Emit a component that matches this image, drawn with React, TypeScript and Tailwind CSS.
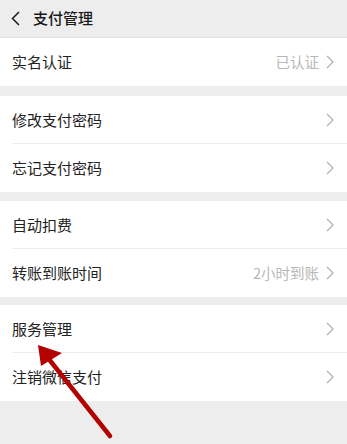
import React from "react";

const Chevron = () => (
  <svg width="8" height="14" viewBox="0 0 8 14" className="shrink-0">
    <path d="M1 1 L7 7 L1 13" fill="none" stroke="#b2b2b2" strokeWidth="1.3" />
  </svg>
);

function Row({ label, value, divider }: { label: string; value?: string; divider?: boolean }) {
  return (
    <div className="relative h-[48px] flex items-center pl-[12px] pr-[13px] bg-white">
      <span className="flex-1 text-[15px] text-[#222222]">{label}</span>
      {value && <span className="text-[14.5px] text-[#b7b7b7] mr-[7px]">{value}</span>}
      <Chevron />
      {divider && <div className="absolute left-[12px] right-0 bottom-0 h-px bg-[#ececec]" />}
    </div>
  );
}

export default function App() {
  return (
    <div
      className="relative w-[347px] h-[444px] overflow-hidden bg-[#ededed]"
      style={{ fontFamily: '"Noto Sans CJK SC", "Noto Sans", sans-serif' }}
    >
      <div className="h-[38px] flex items-center pl-[11px] border-b border-[#e3e3e3]">
        <svg width="9" height="15" viewBox="0 0 9 15">
          <path d="M8 1 L1.5 7.5 L8 14" fill="none" stroke="#1a1a1a" strokeWidth="1.5" />
        </svg>
        <span className="ml-[13px] text-[15px] font-medium text-[#1a1a1a]">支付管理</span>
      </div>
      <Row label="实名认证" value="已认证" />
      <div className="h-[10px]" />
      <Row label="修改支付密码" divider />
      <Row label="忘记支付密码" />
      <div className="h-[9px]" />
      <Row label="自动扣费" divider />
      <Row label="转账到账时间" value="2小时到账" />
      <div className="h-[8px]" />
      <Row label="服务管理" divider />
      <Row label="注销微信支付" />

      <svg className="absolute left-0 top-0" width="347" height="444" viewBox="0 0 347 444">
        <line x1="110" y1="436" x2="44" y2="353" stroke="#b30000" strokeWidth="4.5" strokeLinecap="round" />
        <polygon points="38,345 62,353 41,366" fill="#b30000" />
      </svg>
    </div>
  );
}
